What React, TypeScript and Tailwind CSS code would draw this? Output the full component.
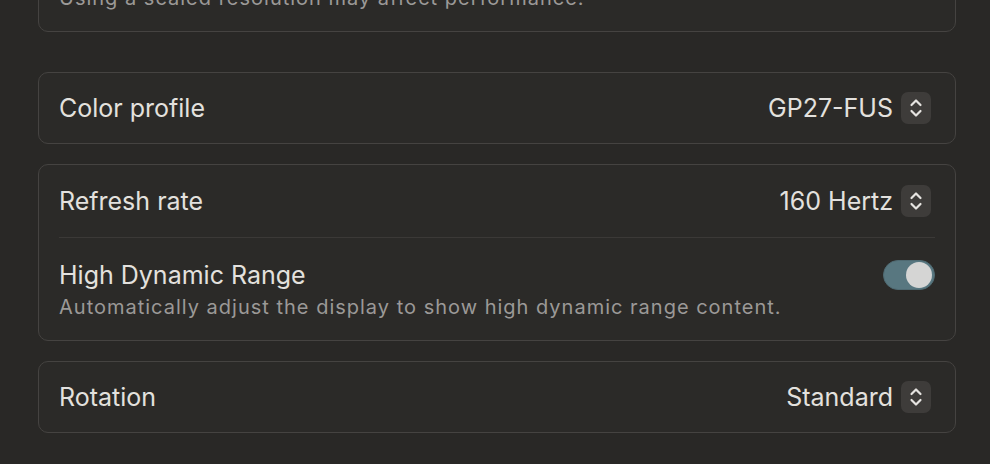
function Stepper() {
  return (
    <div className="mr-[4px] flex h-[32px] w-[30px] items-center justify-center rounded-[7px] bg-[#3e3c3a]">
      <svg width="14" height="22" viewBox="0 0 14 22" fill="none" stroke="#e6e4e1" strokeWidth="2.2" strokeLinecap="round" strokeLinejoin="round">
        <path d="M2.5 8 L7 3.5 L11.5 8" />
        <path d="M2.5 14 L7 18.5 L11.5 14" />
      </svg>
    </div>
  );
}

function SelectRow({ label, value, tall }: { label: string; value: string; tall?: boolean }) {
  return (
    <div className={`flex items-center justify-between ${tall ? "h-[72px]" : "h-[70px]"}`}>
      <span>{label}</span>
      <div className="flex items-center gap-[8px]">
        <span>{value}</span>
        <Stepper />
      </div>
    </div>
  );
}

export default function App() {
  return (
    <div
      className="h-[464px] w-[990px] overflow-hidden bg-[#292826] pl-[38px] pr-[34px] text-[25px] leading-[30px] text-[#e3e1de]"
      style={{ fontFamily: "Inter, 'Noto Sans', sans-serif" }}
    >
      <div className="-mt-[28px] rounded-[10px] border border-[#454341] bg-[#2b2a28] px-[20px] pb-[20px] pt-[12px]">
        <p className="text-[20px] leading-[26px] tracking-[1px] text-[#9b9997]">
          Using a scaled resolution may affect performance.
        </p>
      </div>

      <div className="mt-[40px] rounded-[10px] border border-[#454341] bg-[#2b2a28] px-[20px]">
        <SelectRow label="Color profile" value="GP27-FUS" />
      </div>

      <div className="mt-[20px] rounded-[10px] border border-[#454341] bg-[#2b2a28] px-[20px]">
        <SelectRow label="Refresh rate" value="160 Hertz" tall />
        <div className="h-px bg-[#3b3937]" />
        <div className="pb-[20px] pt-[22px]">
          <div className="flex items-center justify-between">
            <span>High Dynamic Range</span>
            <div className="flex h-[30px] w-[52px] items-center justify-end rounded-full border border-[#4f6a72] bg-[#587780] px-[2px]">
              <div className="h-[26px] w-[26px] rounded-full bg-[#d5d5d4]" />
            </div>
          </div>
          <p className="mt-[4px] text-[20px] leading-[26px] tracking-[1px] text-[#9b9997]">
            Automatically adjust the display to show high dynamic range content.
          </p>
        </div>
      </div>

      <div className="mt-[20px] rounded-[10px] border border-[#454341] bg-[#2b2a28] px-[20px]">
        <SelectRow label="Rotation" value="Standard" />
      </div>
    </div>
  );
}
